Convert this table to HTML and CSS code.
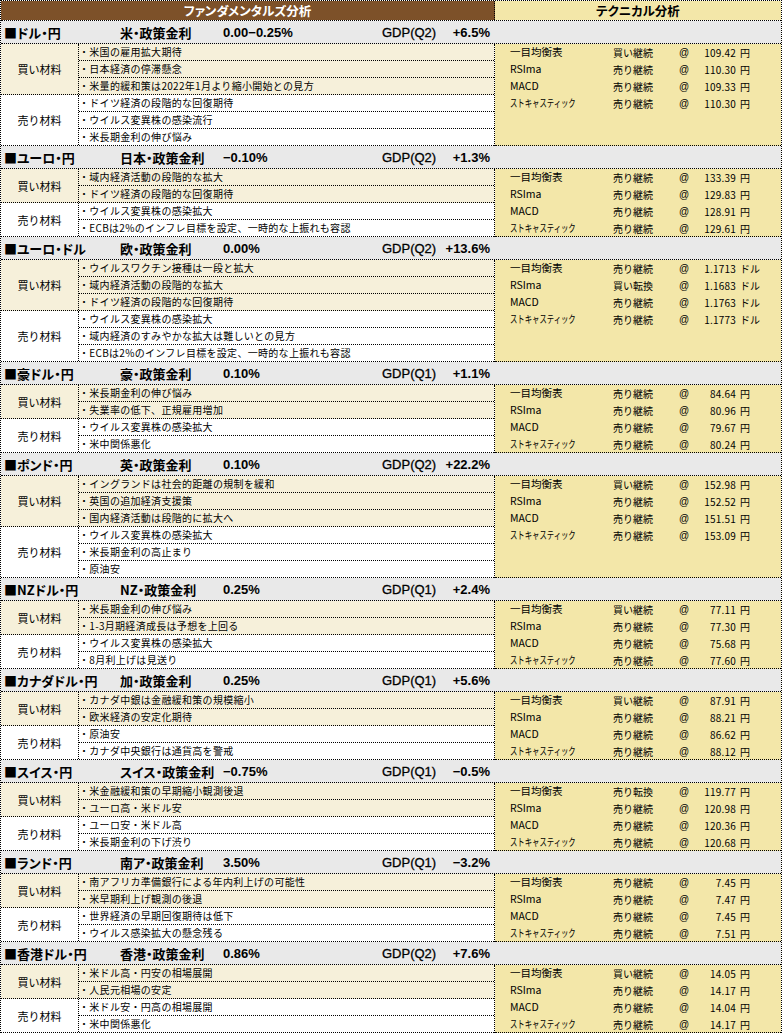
FILE: index.html
```html
<!DOCTYPE html>
<html lang="ja">
<head>
<meta charset="utf-8">
<title>ファンダメンタルズ分析 / テクニカル分析</title>
<link rel="stylesheet" href="styles.css">
</head>
<body>
<div class="sheet">
  <div class="top">
    <div class="top-fund">ファンダメンタルズ分析</div>
    <div class="top-tech">テクニカル分析</div>
  </div>

  <section class="pair">
    <div class="pair-head">
      <span class="ph-name">■ドル・円</span>
      <span class="ph-rlabel">米・政策金利</span>
      <span class="ph-rate">0.00−0.25%</span>
      <span class="ph-glabel">GDP(Q2)</span>
      <span class="ph-gdp">+6.5%</span>
    </div>
    <div class="pair-body">
      <div class="fund">
        <div class="group buy">
          <div class="glabel">買い材料</div>
          <ul class="items">
            <li class="item">・米国の雇用拡大期待</li>
            <li class="item">・日本経済の停滞懸念</li>
            <li class="item">・米量的緩和策は2022年1月より縮小開始との見方</li>
          </ul>
        </div>
        <div class="group sell">
          <div class="glabel">売り材料</div>
          <ul class="items">
            <li class="item">・ドイツ経済の段階的な回復期待</li>
            <li class="item">・ウイルス変異株の感染流行</li>
            <li class="item">・米長期金利の伸び悩み</li>
          </ul>
        </div>
      </div>
      <div class="tech">
        <div class="trow"><span class="tname">一目均衡表</span><span class="tsig">買い継続</span><span class="tat">@</span><span class="tval">109.42</span><span class="tunit">円</span></div>
        <div class="trow"><span class="tname">RSIma</span><span class="tsig">売り継続</span><span class="tat">@</span><span class="tval">110.30</span><span class="tunit">円</span></div>
        <div class="trow"><span class="tname">MACD</span><span class="tsig">売り継続</span><span class="tat">@</span><span class="tval">109.33</span><span class="tunit">円</span></div>
        <div class="trow"><span class="tname"><span class="narrow">ストキャスティック</span></span><span class="tsig">売り継続</span><span class="tat">@</span><span class="tval">110.30</span><span class="tunit">円</span></div>
      </div>
    </div>
  </section>

  <section class="pair">
    <div class="pair-head">
      <span class="ph-name">■ユーロ・円</span>
      <span class="ph-rlabel">日本・政策金利</span>
      <span class="ph-rate">−0.10%</span>
      <span class="ph-glabel">GDP(Q2)</span>
      <span class="ph-gdp">+1.3%</span>
    </div>
    <div class="pair-body">
      <div class="fund">
        <div class="group buy">
          <div class="glabel">買い材料</div>
          <ul class="items">
            <li class="item">・域内経済活動の段階的な拡大</li>
            <li class="item">・ドイツ経済の段階的な回復期待</li>
          </ul>
        </div>
        <div class="group sell">
          <div class="glabel">売り材料</div>
          <ul class="items">
            <li class="item">・ウイルス変異株の感染拡大</li>
            <li class="item">・ECBは2%のインフレ目標を設定、一時的な上振れも容認</li>
          </ul>
        </div>
      </div>
      <div class="tech">
        <div class="trow"><span class="tname">一目均衡表</span><span class="tsig">売り継続</span><span class="tat">@</span><span class="tval">133.39</span><span class="tunit">円</span></div>
        <div class="trow"><span class="tname">RSIma</span><span class="tsig">売り継続</span><span class="tat">@</span><span class="tval">129.83</span><span class="tunit">円</span></div>
        <div class="trow"><span class="tname">MACD</span><span class="tsig">売り継続</span><span class="tat">@</span><span class="tval">128.91</span><span class="tunit">円</span></div>
        <div class="trow"><span class="tname"><span class="narrow">ストキャスティック</span></span><span class="tsig">売り継続</span><span class="tat">@</span><span class="tval">129.61</span><span class="tunit">円</span></div>
      </div>
    </div>
  </section>

  <section class="pair">
    <div class="pair-head">
      <span class="ph-name">■ユーロ・ドル</span>
      <span class="ph-rlabel">欧・政策金利</span>
      <span class="ph-rate">0.00%</span>
      <span class="ph-glabel">GDP(Q2)</span>
      <span class="ph-gdp">+13.6%</span>
    </div>
    <div class="pair-body">
      <div class="fund">
        <div class="group buy">
          <div class="glabel">買い材料</div>
          <ul class="items">
            <li class="item">・ウイルスワクチン接種は一段と拡大</li>
            <li class="item">・域内経済活動の段階的な拡大</li>
            <li class="item">・ドイツ経済の段階的な回復期待</li>
          </ul>
        </div>
        <div class="group sell">
          <div class="glabel">売り材料</div>
          <ul class="items">
            <li class="item">・ウイルス変異株の感染拡大</li>
            <li class="item">・域内経済のすみやかな拡大は難しいとの見方</li>
            <li class="item">・ECBは2%のインフレ目標を設定、一時的な上振れも容認</li>
          </ul>
        </div>
      </div>
      <div class="tech">
        <div class="trow"><span class="tname">一目均衡表</span><span class="tsig">売り継続</span><span class="tat">@</span><span class="tval">1.1713</span><span class="tunit">ドル</span></div>
        <div class="trow"><span class="tname">RSIma</span><span class="tsig">買い転換</span><span class="tat">@</span><span class="tval">1.1683</span><span class="tunit">ドル</span></div>
        <div class="trow"><span class="tname">MACD</span><span class="tsig">売り継続</span><span class="tat">@</span><span class="tval">1.1763</span><span class="tunit">ドル</span></div>
        <div class="trow"><span class="tname"><span class="narrow">ストキャスティック</span></span><span class="tsig">売り継続</span><span class="tat">@</span><span class="tval">1.1773</span><span class="tunit">ドル</span></div>
      </div>
    </div>
  </section>

  <section class="pair">
    <div class="pair-head">
      <span class="ph-name">■豪ドル・円</span>
      <span class="ph-rlabel">豪・政策金利</span>
      <span class="ph-rate">0.10%</span>
      <span class="ph-glabel">GDP(Q1)</span>
      <span class="ph-gdp">+1.1%</span>
    </div>
    <div class="pair-body">
      <div class="fund">
        <div class="group buy">
          <div class="glabel">買い材料</div>
          <ul class="items">
            <li class="item">・米長期金利の伸び悩み</li>
            <li class="item">・失業率の低下、正規雇用増加</li>
          </ul>
        </div>
        <div class="group sell">
          <div class="glabel">売り材料</div>
          <ul class="items">
            <li class="item">・ウイルス変異株の感染拡大</li>
            <li class="item">・米中関係悪化</li>
          </ul>
        </div>
      </div>
      <div class="tech">
        <div class="trow"><span class="tname">一目均衡表</span><span class="tsig">売り継続</span><span class="tat">@</span><span class="tval">84.64</span><span class="tunit">円</span></div>
        <div class="trow"><span class="tname">RSIma</span><span class="tsig">売り継続</span><span class="tat">@</span><span class="tval">80.96</span><span class="tunit">円</span></div>
        <div class="trow"><span class="tname">MACD</span><span class="tsig">売り継続</span><span class="tat">@</span><span class="tval">79.67</span><span class="tunit">円</span></div>
        <div class="trow"><span class="tname"><span class="narrow">ストキャスティック</span></span><span class="tsig">売り継続</span><span class="tat">@</span><span class="tval">80.24</span><span class="tunit">円</span></div>
      </div>
    </div>
  </section>

  <section class="pair">
    <div class="pair-head">
      <span class="ph-name">■ポンド・円</span>
      <span class="ph-rlabel">英・政策金利</span>
      <span class="ph-rate">0.10%</span>
      <span class="ph-glabel">GDP(Q2)</span>
      <span class="ph-gdp">+22.2%</span>
    </div>
    <div class="pair-body">
      <div class="fund">
        <div class="group buy">
          <div class="glabel">買い材料</div>
          <ul class="items">
            <li class="item">・イングランドは社会的距離の規制を緩和</li>
            <li class="item">・英国の追加経済支援策</li>
            <li class="item">・国内経済活動は段階的に拡大へ</li>
          </ul>
        </div>
        <div class="group sell">
          <div class="glabel">売り材料</div>
          <ul class="items">
            <li class="item">・ウイルス変異株の感染拡大</li>
            <li class="item">・米長期金利の高止まり</li>
            <li class="item">・原油安</li>
          </ul>
        </div>
      </div>
      <div class="tech">
        <div class="trow"><span class="tname">一目均衡表</span><span class="tsig">買い継続</span><span class="tat">@</span><span class="tval">152.98</span><span class="tunit">円</span></div>
        <div class="trow"><span class="tname">RSIma</span><span class="tsig">売り継続</span><span class="tat">@</span><span class="tval">152.52</span><span class="tunit">円</span></div>
        <div class="trow"><span class="tname">MACD</span><span class="tsig">売り継続</span><span class="tat">@</span><span class="tval">151.51</span><span class="tunit">円</span></div>
        <div class="trow"><span class="tname"><span class="narrow">ストキャスティック</span></span><span class="tsig">売り継続</span><span class="tat">@</span><span class="tval">153.09</span><span class="tunit">円</span></div>
      </div>
    </div>
  </section>

  <section class="pair">
    <div class="pair-head">
      <span class="ph-name">■NZドル・円</span>
      <span class="ph-rlabel">NZ・政策金利</span>
      <span class="ph-rate">0.25%</span>
      <span class="ph-glabel">GDP(Q1)</span>
      <span class="ph-gdp">+2.4%</span>
    </div>
    <div class="pair-body">
      <div class="fund">
        <div class="group buy">
          <div class="glabel">買い材料</div>
          <ul class="items">
            <li class="item">・米長期金利の伸び悩み</li>
            <li class="item">・1-3月期経済成長は予想を上回る</li>
          </ul>
        </div>
        <div class="group sell">
          <div class="glabel">売り材料</div>
          <ul class="items">
            <li class="item">・ウイルス変異株の感染拡大</li>
            <li class="item">・8月利上げは見送り</li>
          </ul>
        </div>
      </div>
      <div class="tech">
        <div class="trow"><span class="tname">一目均衡表</span><span class="tsig">買い継続</span><span class="tat">@</span><span class="tval">77.11</span><span class="tunit">円</span></div>
        <div class="trow"><span class="tname">RSIma</span><span class="tsig">売り継続</span><span class="tat">@</span><span class="tval">77.30</span><span class="tunit">円</span></div>
        <div class="trow"><span class="tname">MACD</span><span class="tsig">売り継続</span><span class="tat">@</span><span class="tval">75.68</span><span class="tunit">円</span></div>
        <div class="trow"><span class="tname"><span class="narrow">ストキャスティック</span></span><span class="tsig">売り継続</span><span class="tat">@</span><span class="tval">77.60</span><span class="tunit">円</span></div>
      </div>
    </div>
  </section>

  <section class="pair">
    <div class="pair-head">
      <span class="ph-name">■カナダドル・円</span>
      <span class="ph-rlabel">加・政策金利</span>
      <span class="ph-rate">0.25%</span>
      <span class="ph-glabel">GDP(Q1)</span>
      <span class="ph-gdp">+5.6%</span>
    </div>
    <div class="pair-body">
      <div class="fund">
        <div class="group buy">
          <div class="glabel">買い材料</div>
          <ul class="items">
            <li class="item">・カナダ中銀は金融緩和策の規模縮小</li>
            <li class="item">・欧米経済の安定化期待</li>
          </ul>
        </div>
        <div class="group sell">
          <div class="glabel">売り材料</div>
          <ul class="items">
            <li class="item">・原油安</li>
            <li class="item">・カナダ中央銀行は通貨高を警戒</li>
          </ul>
        </div>
      </div>
      <div class="tech">
        <div class="trow"><span class="tname">一目均衡表</span><span class="tsig">買い継続</span><span class="tat">@</span><span class="tval">87.91</span><span class="tunit">円</span></div>
        <div class="trow"><span class="tname">RSIma</span><span class="tsig">売り継続</span><span class="tat">@</span><span class="tval">88.21</span><span class="tunit">円</span></div>
        <div class="trow"><span class="tname">MACD</span><span class="tsig">売り継続</span><span class="tat">@</span><span class="tval">86.62</span><span class="tunit">円</span></div>
        <div class="trow"><span class="tname"><span class="narrow">ストキャスティック</span></span><span class="tsig">売り継続</span><span class="tat">@</span><span class="tval">88.12</span><span class="tunit">円</span></div>
      </div>
    </div>
  </section>

  <section class="pair">
    <div class="pair-head">
      <span class="ph-name">■スイス・円</span>
      <span class="ph-rlabel">スイス・政策金利</span>
      <span class="ph-rate">−0.75%</span>
      <span class="ph-glabel">GDP(Q1)</span>
      <span class="ph-gdp">−0.5%</span>
    </div>
    <div class="pair-body">
      <div class="fund">
        <div class="group buy">
          <div class="glabel">買い材料</div>
          <ul class="items">
            <li class="item">・米金融緩和策の早期縮小観測後退</li>
            <li class="item">・ユーロ高・米ドル安</li>
          </ul>
        </div>
        <div class="group sell">
          <div class="glabel">売り材料</div>
          <ul class="items">
            <li class="item">・ユーロ安・米ドル高</li>
            <li class="item">・米長期金利の下げ渋り</li>
          </ul>
        </div>
      </div>
      <div class="tech">
        <div class="trow"><span class="tname">一目均衡表</span><span class="tsig">売り転換</span><span class="tat">@</span><span class="tval">119.77</span><span class="tunit">円</span></div>
        <div class="trow"><span class="tname">RSIma</span><span class="tsig">売り継続</span><span class="tat">@</span><span class="tval">120.98</span><span class="tunit">円</span></div>
        <div class="trow"><span class="tname">MACD</span><span class="tsig">売り継続</span><span class="tat">@</span><span class="tval">120.36</span><span class="tunit">円</span></div>
        <div class="trow"><span class="tname"><span class="narrow">ストキャスティック</span></span><span class="tsig">売り継続</span><span class="tat">@</span><span class="tval">120.68</span><span class="tunit">円</span></div>
      </div>
    </div>
  </section>

  <section class="pair">
    <div class="pair-head">
      <span class="ph-name">■ランド・円</span>
      <span class="ph-rlabel">南ア・政策金利</span>
      <span class="ph-rate">3.50%</span>
      <span class="ph-glabel">GDP(Q1)</span>
      <span class="ph-gdp">−3.2%</span>
    </div>
    <div class="pair-body">
      <div class="fund">
        <div class="group buy">
          <div class="glabel">買い材料</div>
          <ul class="items">
            <li class="item">・南アフリカ準備銀行による年内利上げの可能性</li>
            <li class="item">・米早期利上げ観測の後退</li>
          </ul>
        </div>
        <div class="group sell">
          <div class="glabel">売り材料</div>
          <ul class="items">
            <li class="item">・世界経済の早期回復期待は低下</li>
            <li class="item">・ウイルス感染拡大の懸念残る</li>
          </ul>
        </div>
      </div>
      <div class="tech">
        <div class="trow"><span class="tname">一目均衡表</span><span class="tsig">売り継続</span><span class="tat">@</span><span class="tval">7.45</span><span class="tunit">円</span></div>
        <div class="trow"><span class="tname">RSIma</span><span class="tsig">売り継続</span><span class="tat">@</span><span class="tval">7.47</span><span class="tunit">円</span></div>
        <div class="trow"><span class="tname">MACD</span><span class="tsig">売り継続</span><span class="tat">@</span><span class="tval">7.45</span><span class="tunit">円</span></div>
        <div class="trow"><span class="tname"><span class="narrow">ストキャスティック</span></span><span class="tsig">売り継続</span><span class="tat">@</span><span class="tval">7.51</span><span class="tunit">円</span></div>
      </div>
    </div>
  </section>

  <section class="pair">
    <div class="pair-head">
      <span class="ph-name">■香港ドル・円</span>
      <span class="ph-rlabel">香港・政策金利</span>
      <span class="ph-rate">0.86%</span>
      <span class="ph-glabel">GDP(Q2)</span>
      <span class="ph-gdp">+7.6%</span>
    </div>
    <div class="pair-body">
      <div class="fund">
        <div class="group buy">
          <div class="glabel">買い材料</div>
          <ul class="items">
            <li class="item">・米ドル高・円安の相場展開</li>
            <li class="item">・人民元相場の安定</li>
          </ul>
        </div>
        <div class="group sell">
          <div class="glabel">売り材料</div>
          <ul class="items">
            <li class="item">・米ドル安・円高の相場展開</li>
            <li class="item">・米中関係悪化</li>
          </ul>
        </div>
      </div>
      <div class="tech">
        <div class="trow"><span class="tname">一目均衡表</span><span class="tsig">買い継続</span><span class="tat">@</span><span class="tval">14.05</span><span class="tunit">円</span></div>
        <div class="trow"><span class="tname">RSIma</span><span class="tsig">売り継続</span><span class="tat">@</span><span class="tval">14.17</span><span class="tunit">円</span></div>
        <div class="trow"><span class="tname">MACD</span><span class="tsig">売り継続</span><span class="tat">@</span><span class="tval">14.04</span><span class="tunit">円</span></div>
        <div class="trow"><span class="tname"><span class="narrow">ストキャスティック</span></span><span class="tsig">売り継続</span><span class="tat">@</span><span class="tval">14.17</span><span class="tunit">円</span></div>
      </div>
    </div>
  </section>
</div>
</body>
</html>
```

FILE: styles.css
```css
* {
  box-sizing: border-box;
}

body {
  margin: 0;
  background: #ffffff;
  color: #000000;
  font-family: "Noto Sans CJK JP", sans-serif;
}

.sheet {
  width: 782px;
  border-top: 1px dotted #000;
  border-left: 1px dotted #000;
  border-right: 1px dotted #000;
}

/* top title row */
.top {
  display: flex;
  height: 20px;
  border-bottom: 1px dotted #000;
  font-size: 12.5px;
  font-weight: bold;
  line-height: 19px;
  font-feature-settings: "palt";
}

.top-fund {
  width: 494px;
  background: #7d5129;
  color: #ffffff;
  border-right: 1px dotted #000;
  text-align: center;
}

.top-tech {
  flex: 1;
  background: #f3e7a9;
  text-align: center;
}

/* pair header row */
.pair-head {
  display: flex;
  align-items: center;
  height: 23px;
  background: #e9e9e9;
  border-bottom: 1px dotted #000;
  font-family: "Liberation Sans", "Noto Sans CJK JP", sans-serif;
  font-size: 13px;
  font-weight: bold;
  white-space: nowrap;
}

.ph-name {
  width: 119px;
  padding-left: 3px;
  font-family: "Noto Sans CJK JP", sans-serif;
  font-feature-settings: "palt";
}

.ph-rlabel {
  width: 103px;
  font-family: "Noto Sans CJK JP", sans-serif;
  font-feature-settings: "palt";
}

.ph-rate {
  width: 159px;
}

.ph-glabel {
  width: 62px;
  font-weight: normal;
  -webkit-text-stroke: 0.3px #000;
}

.ph-gdp {
  width: 46px;
  text-align: right;
}

/* body */
.pair-body {
  display: flex;
}

.fund {
  width: 494px;
  border-right: 1px dotted #000;
}

.group {
  display: flex;
  border-bottom: 1px dotted #000;
}

.buy {
  background: #f6f0da;
}

.sell {
  background: #ffffff;
}

.glabel {
  width: 78px;
  flex: none;
  border-right: 1px dotted #000;
  display: flex;
  align-items: center;
  justify-content: center;
  font-size: 11px;
}

.items {
  flex: 1;
  margin: 0;
  padding: 0;
  list-style: none;
}

.item {
  height: 17px;
  border-bottom: 1px dotted #000;
  font-size: 10px;
  line-height: 16px;
  letter-spacing: 0.3px;
  white-space: nowrap;
}

.item:last-child {
  height: 16px;
  border-bottom: none;
}

.tech {
  flex: 1;
  background: #f3e7a9;
  border-bottom: 1px dotted #000;
}

.trow {
  display: grid;
  grid-template-columns: 103px 66px 12px 45px auto;
  height: 17px;
  padding-left: 15px;
  font-size: 10px;
  line-height: 17px;
  white-space: nowrap;
  overflow: hidden;
}

.trow:last-child {
  height: 16px;
}

.tname {
  font-size: 10.5px;
  line-height: 15px;
}

.narrow {
  display: inline-block;
  transform: scaleX(0.7);
  transform-origin: left center;
}

.tat {
  font-family: "Liberation Sans", sans-serif;
}

.tval {
  text-align: right;
  letter-spacing: 0.2px;
}

.tunit {
  padding-left: 4px;
}
```
